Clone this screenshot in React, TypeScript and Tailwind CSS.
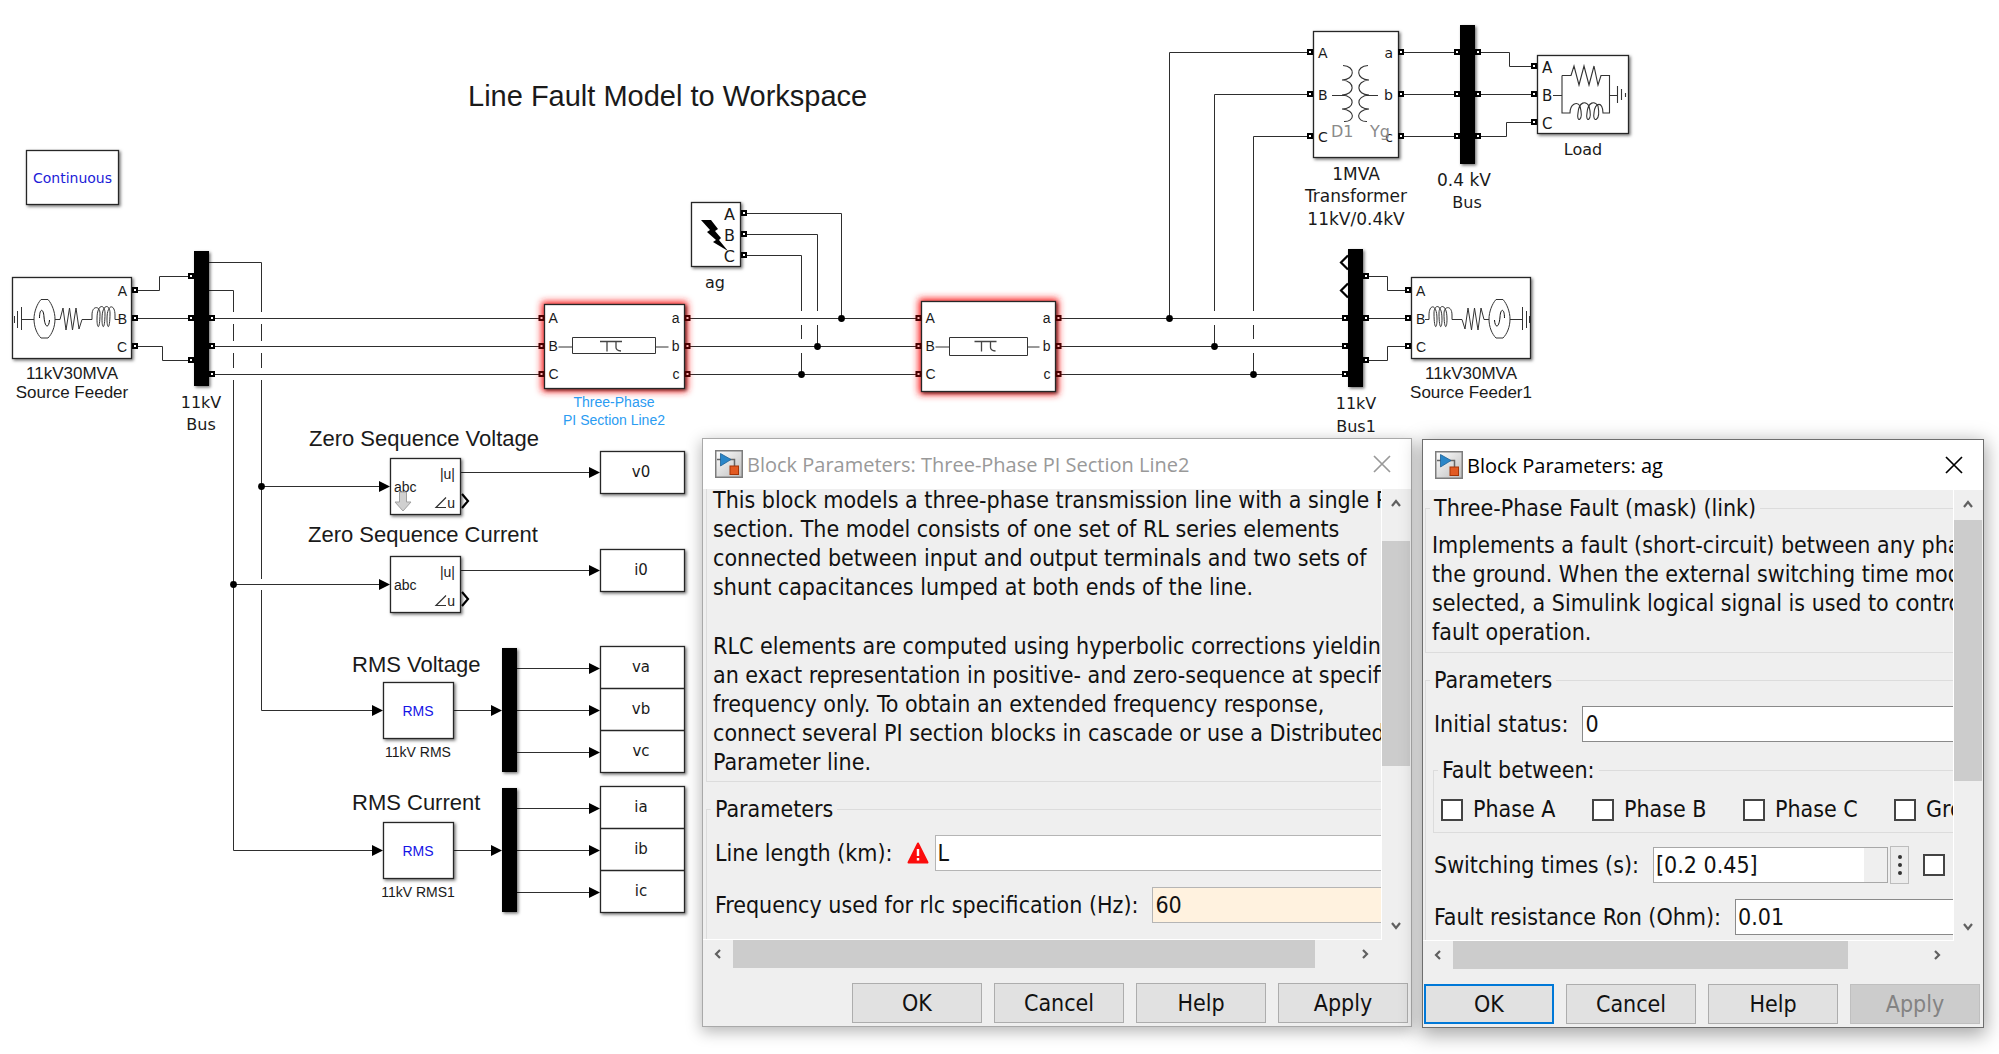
import React, { useId } from "react";

/* ---------- Diagram primitives ---------- */

const ARIAL = "font-['Liberation_Sans',Arial,sans-serif]";
const VERDANA = "font-['DejaVu_Sans',Verdana,sans-serif]";

type Anchor = "start" | "middle" | "end";

function Txt(props: { x: number; y: number; cls: string; anchor?: Anchor; children: string }) {
  return (
    <text x={props.x} y={props.y} textAnchor={props.anchor ?? "start"} className={props.cls}>
      {props.children}
    </text>
  );
}

function Box(props: { x: number; y: number; w: number; h: number; glow?: boolean }) {
  return (
    <g>
      {props.glow && (
        <rect x={props.x - 3} y={props.y - 3} width={props.w + 6} height={props.h + 6} rx={2} fill="#ff2020" filter="url(#glow)" />
      )}
      <rect
        x={props.x}
        y={props.y}
        width={props.w}
        height={props.h}
        fill="#fff"
        stroke="#262626"
        strokeWidth={1.3}
        filter="url(#drop)"
      />
    </g>
  );
}

function Port({ x, y, red }: { x: number; y: number; red?: boolean }) {
  return <rect x={x - 2} y={y - 2} width={4} height={4} fill={red ? "#ffb0b0" : "#fff"} stroke={red ? "#4a0000" : "#000"} strokeWidth={2} />;
}

function Bar({ x, y, h }: { x: number; y: number; h: number }) {
  return <rect x={x} y={y} width={15} height={h} fill="#000" filter="url(#drop)" />;
}

function Arrow({ x, y }: { x: number; y: number }) {
  return <path d={`M${x} ${y}l-11 -5.5v11z`} fill="#000" />;
}

function Dot({ x, y }: { x: number; y: number }) {
  return <circle cx={x} cy={y} r={3.4} fill="#000" />;
}

const WIRES = [
  "M137 290.5H159.5V276.5H189M137 318.5H189M137 346.5H162.5V360.5H189",
  "M209 262.5H261.5V312M261.5 324V341M261.5 353V368M261.5 380V579M261.5 590V710.5H374",
  "M209 290.5H233.5V312M233.5 324V341M233.5 353V368M233.5 380V850.5H374",
  "M214 318.5H539M214 346.5H539M214 374.5H539",
  "M690 318.5H916M690 346.5H916M690 374.5H916",
  "M1061 318.5H1342M1061 346.5H1342M1061 374.5H1342",
  "M746 213.5H841.5V318",
  "M746 234.5H817.5V311M817.5 325V346",
  "M746 255.5H801.5V311M801.5 325V339M801.5 353V374",
  "M1307 52.5H1169.5V318",
  "M1307 94.5H1214.5V311M1214.5 325V346",
  "M1307 136.5H1253.5V311M1253.5 325V339M1253.5 353V374",
  "M1404 52.5H1454M1404 94.5H1454M1404 136.5H1454",
  "M1481 52.5H1509.5V66.5H1532M1481 94.5H1532M1481 136.5H1506.5V122.5H1532",
  "M1369 276.5H1387.5V290.5H1406M1369 318.5H1406M1369 360.5H1387.5V346.5H1406",
  "M261 486.5H381M233 584.5H381M461 472.5H592M461 570.5H592",
  "M454 710.5H494M454 850.5H494",
  "M517 668.5H592M517 710.5H592M517 752.5H592M517 808.5H592M517 850.5H592M517 892.5H592",
];

const SOURCE_SYMBOL =
  "M14.5 316V323M17.5 311V328M21.5 307V330M22 319.5H34M41 299.5H48C52 304 55 312 55 319C55 327 52 334 48 338H41C37 334 34 327 34 319C34 312 37 304 41 299.5Z" +
  "M55 319.5H60L63 308L66 330L69.5 308L72.5 330L76 308L79 329L82 319.5H92" +
  "V315C92 305 100 306 100 313C100 330 97 330 97 319C97 303 105 304 105 313C105 330 102 330 102 319C102 303 110 304 110 313C110 330 107 330 107 319C107 303 115 304 115 315V319.5H119";

function SourceSymbol() {
  return (
    <g fill="none" stroke="#333" strokeWidth={1}>
      <path d={SOURCE_SYMBOL} />
      <path d="M39.5 318C39.5 308 43.5 308 44 317C45 329 49 328 49.5 320" stroke="#111" />
    </g>
  );
}

function PiSection({ x, y, w, h, inner, innerH }: { x: number; y: number; w: number; h: number; inner: number; innerH: number }) {
  const left = x + 28;
  const mid = left + inner / 2;
  return (
    <g>
      <Box x={x} y={y} w={w} h={h} glow />
      {[318, 346, 374].map((py) => (
        <g key={py}>
          <Port x={x - 3} y={py} red />
          <Port x={x + w + 3} y={py} red />
        </g>
      ))}
      <path
        d={`M${x + 14} 347H${left}M${left + inner} 347H${x + w - 16}M${left} 337.5h${inner}v${innerH}h${-inner}z`}
        fill="none"
        stroke="#333"
      />
      <path d={`M${mid - 14} 341.5h22M${mid - 7} 341.5v10M${mid + 2} 341.5v6q0 3 5 3.5`} fill="none" stroke="#444" strokeWidth={1.3} />
      {["A", "B", "C"].map((t, i) => (
        <Txt key={t} x={x + 4} y={323 + i * 28} cls={`${ARIAL} text-[14px]`}>{t}</Txt>
      ))}
      {["a", "b", "c"].map((t, i) => (
        <Txt key={t} x={x + w - 5} y={323 + i * 28} anchor="end" cls={`${ARIAL} text-[14px]`}>{t}</Txt>
      ))}
    </g>
  );
}

function SequenceBlock({ y, linked }: { y: number; linked?: boolean }) {
  return (
    <g>
      <Box x={390.5} y={y} w={70} h={56} />
      <Txt x={394} y={y + 33} cls={`${ARIAL} text-[14px]`}>abc</Txt>
      <Txt x={455} y={y + 20} anchor="end" cls={`${ARIAL} text-[14px]`}>|u|</Txt>
      <Txt x={455} y={y + 49} anchor="end" cls={`${ARIAL} text-[14px]`}>u</Txt>
      <path d={`M446 ${y + 39}L436 ${y + 49}H446`} fill="none" stroke="#333" strokeWidth={1.2} />
      <path d={`M462 ${y + 35.5}L468 ${y + 42.5}L462 ${y + 49.5}`} fill="none" stroke="#000" strokeWidth={2.2} />
      {linked && (
        <path d={`M399.5 ${y + 33.5}h7v10h4.5l-8 9l-8 -9h4.5z`} fill="#d0d0d0" stroke="#a0a0a0" strokeWidth={1} />
      )}
    </g>
  );
}

function Sink({ y, h, names }: { y: number; h: number; names: string[] }) {
  return (
    <g>
      <Box x={600.5} y={y} w={84} h={h * names.length} />
      {names.map((n, i) => (
        <g key={n}>
          {i > 0 && <path d={`M600.5 ${y + h * i}h84`} stroke="#262626" strokeWidth={1.3} />}
          <Txt x={641} y={y + h * i + 25} anchor="middle" cls={`${VERDANA} text-[15px]`}>{n}</Txt>
        </g>
      ))}
    </g>
  );
}

function Diagram() {
  const big = `${ARIAL} text-[22px]`;
  return (
    <svg viewBox="0 0 1999 1054" className="block h-auto w-full fill-[#1a1a1a]" role="img" aria-label="Line fault model">
      <defs>
        <filter id="drop" x="-20%" y="-20%" width="150%" height="150%">
          <feDropShadow dx="1.5" dy="1.5" stdDeviation="1.5" floodColor="#000" floodOpacity="0.55" />
        </filter>
        <filter id="glow" x="-20%" y="-30%" width="140%" height="160%">
          <feGaussianBlur stdDeviation="3.5" />
        </filter>
      </defs>

      <path d={WIRES.join("")} fill="none" stroke="#2e2e2e" strokeWidth={1} />

      <Txt x={468} y={106} cls={`${ARIAL} text-[29px]`}>Line Fault Model to Workspace</Txt>

      <Box x={26.5} y={150.5} w={92} h={54} />
      <Txt x={72.5} y={183} anchor="middle" cls={`${VERDANA} text-[14px] fill-[#1c1cd8]`}>Continuous</Txt>

      {/* Left source feeder and bus */}
      <Box x={12.5} y={277.5} w={119} h={81} />
      <SourceSymbol />
      {["A", "B", "C"].map((t, i) => (
        <g key={t}>
          <Txt x={127} y={296 + i * 28} anchor="end" cls={`${ARIAL} text-[14px]`}>{t}</Txt>
          <Port x={135} y={290 + i * 28} />
        </g>
      ))}
      <Txt x={72} y={379} anchor="middle" cls={`${ARIAL} text-[17px]`}>11kV30MVA</Txt>
      <Txt x={72} y={398} anchor="middle" cls={`${ARIAL} text-[17px]`}>Source Feeder</Txt>
      <Bar x={194} y={251} h={135} />
      {[276, 318, 360].map((y) => <Port key={y} x={191} y={y} />)}
      {[318, 346, 374].map((y) => <Port key={y} x={212} y={y} />)}
      <Txt x={201} y={408} anchor="middle" cls={`${VERDANA} text-[16px]`}>11kV</Txt>
      <Txt x={201} y={430} anchor="middle" cls={`${VERDANA} text-[16px]`}>Bus</Txt>

      {/* Line sections */}
      <PiSection x={544.5} y={304.5} w={140} h={84} inner={83} innerH={16} />
      <Txt x={614} y={407} anchor="middle" cls={`${ARIAL} text-[14px] fill-[#2b9cf2]`}>Three-Phase</Txt>
      <Txt x={614} y={425} anchor="middle" cls={`${ARIAL} text-[14px] fill-[#2b9cf2]`}>PI Section Line2</Txt>
      <PiSection x={921.5} y={301.5} w={134} h={90} inner={78} innerH={18} />

      {/* Fault block */}
      <Box x={691.5} y={202.5} w={49} h={64} />
      <path d="M701 220L711 220L718 229L715 231L721 238L719 240L728 251L713 242L716 240L707 232L710 230Z" fill="#000" />
      {["A", "B", "C"].map((t, i) => (
        <g key={t}>
          <Txt x={735} y={220 + i * 21} anchor="end" cls={`${VERDANA} text-[16px]`}>{t}</Txt>
          <Port x={744} y={213 + i * 21} />
        </g>
      ))}
      <Txt x={715} y={288} anchor="middle" cls={`${VERDANA} text-[16px]`}>ag</Txt>
      <Dot x={841.5} y={318.5} />
      <Dot x={817.5} y={346.5} />
      <Dot x={801.5} y={374.5} />
      <Dot x={1169.5} y={318.5} />
      <Dot x={1214.5} y={346.5} />
      <Dot x={1253.5} y={374.5} />

      {/* Transformer */}
      <Box x={1313.5} y={31.5} w={85} h={126} />
      {["A", "B", "C"].map((t, i) => (
        <g key={t}>
          <Txt x={1318} y={58 + i * 42} cls={`${VERDANA} text-[14px]`}>{t}</Txt>
          <Txt x={1393} y={58 + i * 42} anchor="end" cls={`${VERDANA} text-[14px]`}>{t.toLowerCase()}</Txt>
          <Port x={1310} y={52 + i * 42} />
          <Port x={1401} y={52 + i * 42} />
        </g>
      ))}
      <path
        d="M1343 65.5C1356 66 1355 80 1342 80C1356 81 1355 95 1342 95C1356 96 1355 109 1342 109C1356 110 1355 122 1344 121.5M1332 95.5H1344M1368 65.5C1355 66 1356 80 1369 80C1355 81 1356 95 1369 95C1355 96 1356 109 1369 109C1355 110 1356 122 1367 121.5M1367 95.5H1378"
        fill="none"
        stroke="#333"
        strokeWidth={1.1}
      />
      <Txt x={1331} y={137} cls={`${VERDANA} text-[16px] fill-[#8a8a8a]`}>D1</Txt>
      <Txt x={1370} y={137} cls={`${VERDANA} text-[16px] fill-[#8a8a8a]`}>Yg</Txt>
      <Txt x={1356} y={180} anchor="middle" cls={`${VERDANA} text-[17px]`}>1MVA</Txt>
      <Txt x={1356} y={202} anchor="middle" cls={`${VERDANA} text-[17px]`}>Transformer</Txt>
      <Txt x={1356} y={225} anchor="middle" cls={`${VERDANA} text-[17px]`}>11kV/0.4kV</Txt>

      {/* Low-voltage bus and load */}
      <Bar x={1460} y={25} h={139} />
      {[52, 94, 136].map((y) => (
        <g key={y}>
          <Port x={1457} y={y} />
          <Port x={1478} y={y} />
        </g>
      ))}
      <Txt x={1464} y={186} anchor="middle" cls={`${VERDANA} text-[17px]`}>0.4 kV</Txt>
      <Txt x={1467} y={208} anchor="middle" cls={`${VERDANA} text-[16px]`}>Bus</Txt>
      <Box x={1537.5} y={55.5} w={91} h={78} />
      {["A", "B", "C"].map((t, i) => (
        <g key={t}>
          <Txt x={1542} y={73 + i * 28} cls={`${VERDANA} text-[15px]`}>{t}</Txt>
          <Port x={1534} y={66 + i * 28} />
        </g>
      ))}
      <path
        d="M1553 95.5H1562M1562 75.5V113H1570C1570 104 1577 101 1580 106C1584 122 1576 123 1578 113C1579 101 1586 101 1589 106C1593 122 1585 123 1587 113C1588 101 1595 101 1598 106C1601 122 1592 123 1594 113C1595 102 1603 101 1603 113H1609.5V75.5H1601L1598 85L1594 66L1589 85L1584 66L1579 85L1574 66L1571 75.5H1562M1609 95.5H1617M1617.5 86V103M1621.5 89V100M1625.5 93V97"
        fill="none"
        stroke="#333"
        strokeWidth={1.1}
      />
      <Txt x={1583} y={155} anchor="middle" cls={`${VERDANA} text-[16px]`}>Load</Txt>

      {/* Right bus and source feeder */}
      <path d="M1348 255.5L1341 262.5L1348 269.5M1348 283.5L1341 290.5L1348 297.5" fill="none" stroke="#000" strokeWidth={2.2} />
      <Bar x={1348} y={249} h={138} />
      {[318, 346, 374].map((y) => <Port key={y} x={1345} y={y} />)}
      {[276, 318, 360].map((y) => <Port key={y} x={1366} y={y} />)}
      <Txt x={1356} y={409} anchor="middle" cls={`${VERDANA} text-[16px]`}>11kV</Txt>
      <Txt x={1356} y={432} anchor="middle" cls={`${VERDANA} text-[16px]`}>Bus1</Txt>
      <Box x={1411.5} y={277.5} w={119} h={81} />
      <g transform="matrix(-1 0 0 1 1544 0)">
        <SourceSymbol />
      </g>
      {["A", "B", "C"].map((t, i) => (
        <g key={t}>
          <Txt x={1416} y={296 + i * 28} cls={`${ARIAL} text-[14px]`}>{t}</Txt>
          <Port x={1408} y={290 + i * 28} />
        </g>
      ))}
      <Txt x={1471} y={379} anchor="middle" cls={`${ARIAL} text-[17px]`}>11kV30MVA</Txt>
      <Txt x={1471} y={398} anchor="middle" cls={`${ARIAL} text-[17px]`}>Source Feeder1</Txt>

      {/* Zero sequence measurement */}
      <Txt x={309} y={446} cls={big}>Zero Sequence Voltage</Txt>
      <Txt x={308} y={542} cls={big}>Zero Sequence Current</Txt>
      <SequenceBlock y={458.5} linked />
      <SequenceBlock y={556.5} />
      <Dot x={261.5} y={486.5} />
      <Dot x={233.5} y={584.5} />
      <Arrow x={390} y={486.5} />
      <Arrow x={390} y={584.5} />
      <Arrow x={600} y={472.5} />
      <Arrow x={600} y={570.5} />
      <Sink y={451.5} h={42} names={["v0"]} />
      <Sink y={549.5} h={42} names={["i0"]} />

      {/* RMS measurement */}
      <Txt x={352} y={672} cls={big}>RMS Voltage</Txt>
      <Txt x={352} y={810} cls={big}>RMS Current</Txt>
      {[682.5, 822.5].map((y, i) => (
        <g key={y}>
          <Box x={383.5} y={y} w={70} h={56} />
          <Txt x={418} y={y + 33} anchor="middle" cls={`${ARIAL} text-[14px] fill-[#1414e6]`}>RMS</Txt>
          <Txt x={418} y={y + 74} anchor="middle" cls={`${ARIAL} text-[14px]`}>{i === 0 ? "11kV RMS" : "11kV RMS1"}</Txt>
          <Arrow x={383} y={y + 28} />
          <Arrow x={502} y={y + 28} />
          <Bar x={502} y={y - 34.5} h={124} />
          {[-42, 0, 42].map((d) => <Arrow key={d} x={600} y={y + 28 + d} />)}
        </g>
      ))}
      <Sink y={646.5} h={42} names={["va", "vb", "vc"]} />
      <Sink y={786.5} h={42} names={["ia", "ib", "ic"]} />
    </svg>
  );
}

/* ---------- Dialog parts ---------- */

function BlockIcon() {
  return (
    <svg viewBox="0 0 28 28" className="size-7 shrink-0" aria-hidden="true">
      <defs>
        <linearGradient id="plate" x1="0" y1="0" x2="1" y2="1">
          <stop offset="0" stopColor="#ffffff" />
          <stop offset="1" stopColor="#bdbdbd" />
        </linearGradient>
      </defs>
      <rect x="0.75" y="0.75" width="26.5" height="26.5" fill="url(#plate)" stroke="#7d7d7d" strokeWidth="1.5" />
      <path d="M15 9.5H19.5V17" fill="none" stroke="#666" strokeWidth="1.5" />
      <path d="M2 9.5H6" stroke="#666" strokeWidth="1.5" />
      <path d="M5.5 3.5L16 9.5L5.5 16Z" fill="#2a86c8" stroke="#1b5f96" strokeWidth="0.8" />
      <rect x="15" y="16" width="8.5" height="8.5" fill="#e25a22" stroke="#a33407" />
    </svg>
  );
}

const CHEVRONS = { up: "M3 9L7 4L11 9", down: "M3 5L7 10L11 5", left: "M9 3L5 7L9 11", right: "M5 3L9 7L5 11" };

function ScrollButton({ dir }: { dir: keyof typeof CHEVRONS }) {
  return (
    <button type="button" aria-label={`Scroll ${dir}`} className="flex size-[30px] shrink-0 items-center justify-center self-center">
      <svg viewBox="0 0 14 14" className="size-3.5" fill="none" stroke="#606060" strokeWidth="2.2">
        <path d={CHEVRONS[dir]} />
      </svg>
    </button>
  );
}

function DialogButton({ label, primary, disabled }: { label: string; primary?: boolean; disabled?: boolean }) {
  const tone = disabled
    ? "border border-[#bfbfbf] bg-[#cccccc] text-[#838383]"
    : primary
      ? "border-2 border-[#0078d7] bg-[#e1e1e1]"
      : "border border-[#adadad] bg-[#e1e1e1]";
  return (
    <button type="button" disabled={disabled} className={`h-10 w-[130px] leading-[29px] ${tone}`}>
      {label}
    </button>
  );
}

function Dialog(props: {
  title: string;
  active?: boolean;
  className: string;
  vThumb: string;
  hThumb: string;
  children: React.ReactNode;
}) {
  const { active } = props;
  return (
    <section
      aria-label={props.title}
      className={`flex shrink-0 flex-col border bg-[#efefef] font-['DejaVu_Sans_Condensed',Tahoma,sans-serif] text-[23px] leading-[29px] text-[#111] ${
        active ? "border-[#6e6e6e] shadow-[0_5px_18px_2px_rgba(0,0,0,0.35)]" : "border-[#a9a9a9] shadow-[0_4px_14px_1px_rgba(0,0,0,0.28)]"
      } ${props.className}`}
    >
      <header
        className={`flex h-[50px] items-center gap-1 bg-white pr-5 pl-3 font-['Open_Sans','Segoe_UI',sans-serif] text-[20px] ${
          active ? "text-black" : "text-[#999]"
        }`}
      >
        <BlockIcon />
        <h2 className="flex-1">{props.title}</h2>
        <button type="button" aria-label="Close">
          <svg viewBox="0 0 18 18" className="size-[18px]" fill="none" stroke="currentColor" strokeWidth="1.7">
            <path d="M1 1L17 17M17 1L1 17" />
          </svg>
        </button>
      </header>
      <div className="flex">
        <div className="h-[451px] flex-1 overflow-hidden border-r border-b border-white whitespace-nowrap">{props.children}</div>
        <div className="mr-px flex w-7 flex-col justify-between">
          <ScrollButton dir="up" />
          <div className="flex-1">
            <div className={`bg-[#cccccc] ${props.vThumb}`} />
          </div>
          <ScrollButton dir="down" />
        </div>
      </div>
      <div className="mr-[31px] flex h-7">
        <ScrollButton dir="left" />
        <div className="flex-1">
          <div className={`h-full bg-[#cccccc] ${props.hThumb}`} />
        </div>
        <ScrollButton dir="right" />
      </div>
      <footer className="flex justify-end gap-3 pt-[15px] pr-[3px] pb-[3px]">
        <DialogButton label="OK" primary={active} />
        <DialogButton label="Cancel" />
        <DialogButton label="Help" />
        <DialogButton label="Apply" disabled={active} />
      </footer>
    </section>
  );
}

function Group({ title, className = "", children }: { title: string; className?: string; children: React.ReactNode }) {
  return (
    <fieldset className={`border border-[#dcdcdc] ${className}`}>
      <legend className="ml-1 px-1">{title}</legend>
      {children}
    </fieldset>
  );
}

function Field(props: { label: string; value: string; input: string; icon?: React.ReactNode; after?: React.ReactNode }) {
  const id = useId();
  return (
    <div className="flex h-9 items-center pl-2">
      <label htmlFor={id} className="mr-3.5 shrink-0">
        {props.label}
      </label>
      {props.icon}
      <input id={id} type="text" defaultValue={props.value} className={`h-9 min-w-0 border pl-0.5 outline-none ${props.input}`} />
      {props.after}
    </div>
  );
}

const CHECKBOX = "size-[22px] shrink-0 appearance-none border-2 border-[#444] bg-white";

function WarningIcon() {
  return (
    <svg viewBox="0 0 22 22" className="mr-1.5 size-[22px] shrink-0" role="img" aria-label="Error">
      <path d="M11 1.5L20.5 20.5H1.5Z" fill="#fb0d0d" stroke="#fb0d0d" strokeWidth="2" strokeLinejoin="round" />
      <path d="M9.8 7H12.2V14H9.8ZM9.8 16H12.2V18.5H9.8Z" fill="#fff" />
    </svg>
  );
}

function LineDialog() {
  return (
    <Dialog title="Block Parameters: Three-Phase PI Section Line2" className="w-[710px]" vThumb="mt-[22px] h-[225px]" hThumb="w-[582px]">
      <div className="-mt-[3px] flex w-[760px] flex-col gap-[13px] pl-[3px]">
        <div className="border-b border-l border-[#dcdcdc] pb-1 pl-1.5">
          <p>
            This block models a three-phase transmission line with a single PI
            <br />
            section. The model consists of one set of RL series elements
            <br />
            connected between input and output terminals and two sets of
            <br />
            shunt capacitances lumped at both ends of the line.
          </p>
          <p className="mt-[30px]">
            RLC elements are computed using hyperbolic corrections yielding
            <br />
            an exact representation in positive- and zero-sequence at specified
            <br />
            frequency only. To obtain an extended frequency response,
            <br />
            connect several PI section blocks in cascade or use a Distributed
            <br />
            Parameter line.
          </p>
        </div>
        <Group title="Parameters">
          <div className="flex flex-col gap-4 pt-[11px] pb-8">
            <Field label="Line length (km):" value="L" input="flex-1 border-[#b5b5b5] bg-white" icon={<WarningIcon />} />
            <Field label="Frequency used for rlc specification (Hz):" value="60" input="flex-1 border-[#b5b5b5] bg-[#fff2df]" />
          </div>
        </Group>
      </div>
    </Dialog>
  );
}

function FaultDialog() {
  return (
    <Dialog title="Block Parameters: ag" active className="mt-px w-[562px]" vThumb="h-[261px]" hThumb="w-[395px]">
      <div className="flex w-[640px] flex-col gap-[13px] pt-1 pl-0.5">
        <Group title="Three-Phase Fault (mask) (link)">
          <p className="pt-2 pb-[5px] pl-1.5">
            Implements a fault (short-circuit) between any phase and
            <br />
            the ground. When the external switching time mode is
            <br />
            selected, a Simulink logical signal is used to control the
            <br />
            fault operation.
          </p>
        </Group>
        <Group title="Parameters">
          <div className="flex flex-col pt-[11px] pb-6">
            <Field label="Initial status:" value="0" input="flex-1 border-[#8a8a8a] bg-white" />
            <Group title="Fault between:" className="mt-3.5 ml-[7px]">
              <div className="flex pt-2.5 pb-2 pl-[7px]">
                {["Phase A", "Phase B", "Phase C", "Ground"].map((name) => (
                  <label key={name} className="flex w-[151px] shrink-0 items-center gap-2.5">
                    <input type="checkbox" className={CHECKBOX} />
                    {name}
                  </label>
                ))}
              </div>
            </Group>
            <div className="mt-3.5 flex flex-col gap-4">
              <Field
                label="Switching times (s):"
                value="[0.2 0.45]"
                input="w-[235px] border-[#a8a8a8] bg-white shadow-[inset_-23px_0_0_#efefef]"
                after={
                  <>
                    <button
                      type="button"
                      aria-label="More options"
                      className="ml-0.5 flex h-[38px] w-[19px] shrink-0 flex-col items-center justify-center gap-1 border border-[#bdbdbd] bg-[#ececec]"
                    >
                      <span className="size-1 rounded-full bg-[#333]" />
                      <span className="size-1 rounded-full bg-[#333]" />
                      <span className="size-1 rounded-full bg-[#333]" />
                    </button>
                    <input type="checkbox" aria-label="External switching control" className={`ml-3.5 ${CHECKBOX}`} />
                  </>
                }
              />
              <Field label="Fault resistance Ron (Ohm):" value="0.01" input="flex-1 border-[#8a8a8a] bg-white" />
            </div>
          </div>
        </Group>
      </div>
    </Dialog>
  );
}

export default function App() {
  return (
    <main className="relative min-h-screen w-full overflow-hidden bg-white">
      <Diagram />
      <div className="absolute inset-x-0 top-[438px] flex items-start justify-end gap-2.5 pr-[15px]">
        <LineDialog />
        <FaultDialog />
      </div>
    </main>
  );
}
